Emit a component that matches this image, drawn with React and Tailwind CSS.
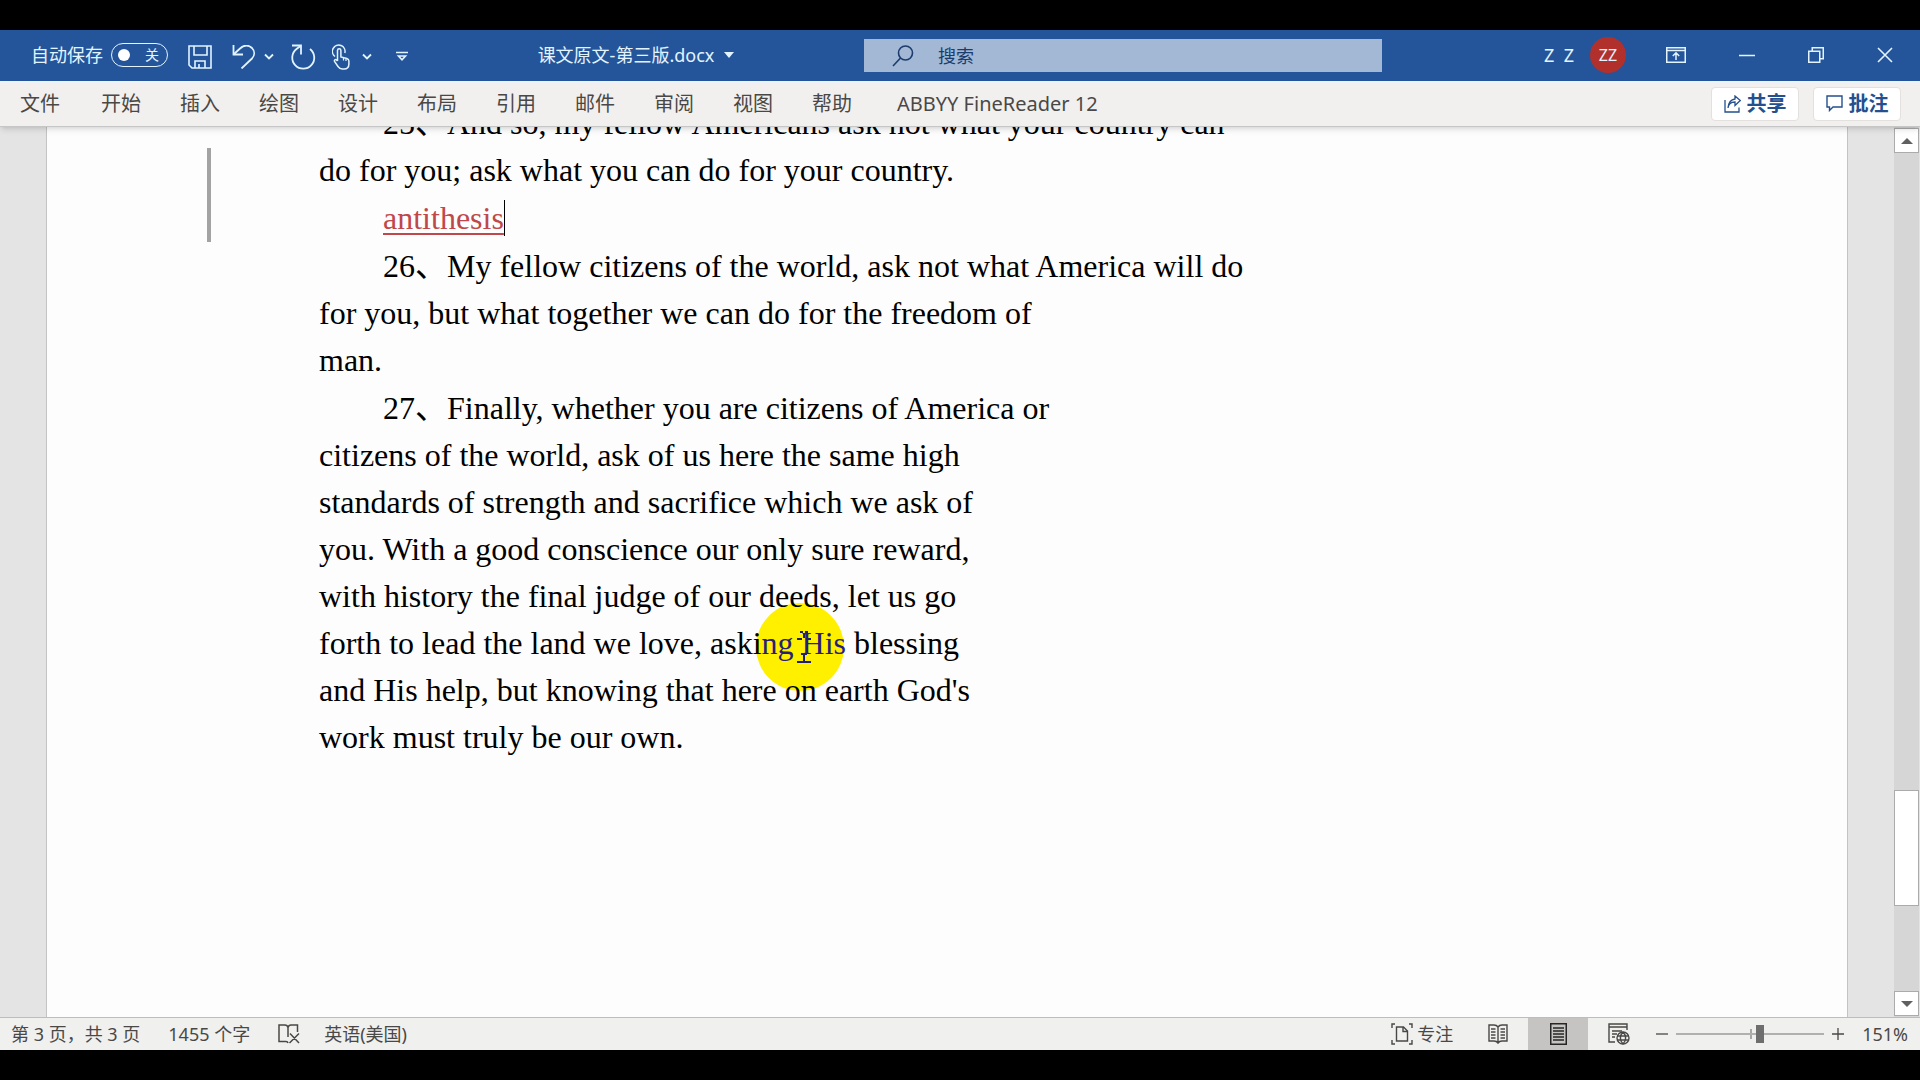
import React, { useState } from "react";

const tabs = ["开始", "插入", "绘图", "设计", "布局", "引用", "邮件", "审阅", "视图", "帮助"];

// Each paragraph keeps its own hard line breaks
const paragraph26 = [
  "for you, but what together we can do for the freedom of",
  "man.",
];

const paragraph27 = [
  "citizens of the world, ask of us here the same high",
  "standards of strength and sacrifice which we ask of",
  "you. With a good conscience our only sure reward,",
  "with history the final judge of our deeds, let us go",
];

function ChevronIcon() {
  return (
    <svg className="w-2.5 h-2" viewBox="0 0 10 8" fill="none" stroke="currentColor" strokeWidth="1.8">
      <path d="M1 1.5l4 4 4-4" />
    </svg>
  );
}

function SaveIcon() {
  return (
    <svg className="w-6 h-6" viewBox="0 0 24 24" fill="none" stroke="currentColor" strokeWidth="1.6">
      <path d="M1 1h22v22H4l-3-3z" />
      <path d="M6 1v9h13V1M7 23v-7h10v7M11 23v-4" />
    </svg>
  );
}

function UndoIcon() {
  return (
    <svg className="w-6 h-6" viewBox="0 0 24 24" fill="none" stroke="currentColor" strokeWidth="1.8">
      <path d="M1.5 0v9.5H11" />
      <path d="M1.5 9.5L8 3.5C12-.5 17 0 20 3c3 3.2 2.8 7.5 0 10.5L9.5 23.5" />
    </svg>
  );
}

function RedoIcon() {
  return (
    <svg className="w-[26px] h-[26px]" viewBox="0 0 26 26" fill="none" stroke="currentColor" strokeWidth="1.8">
      <path d="M2 1.5h9v9" />
      <path d="M10.5 2L6.500 5A11 11 0 1 0 20 5" />
    </svg>
  );
}

function TouchIcon() {
  return (
    <svg className="w-[18px] h-[26px]" viewBox="0 0 18 26" fill="none" stroke="currentColor" strokeWidth="1.5">
      <path d="M3 12.5A6.300 6.300 0 1 1 12.800 9" />
      <path d="M5.500 17V6.500a1.700 1.700 0 0 1 3.400 0V13l6 1.500c1.500.4 2 1.200 2 2.500v3c0 3-2 5-5 5h-1.500c-2 0-3.200-.8-4.400-2.500L2.500 17.500c-.6-1.500 1-2.500 2-1.500l1 1" />
      <path d="M11.500 14v2.500M14 14.500v2.500" strokeWidth="1.2" />
    </svg>
  );
}

function CustomizeIcon() {
  return (
    <svg className="w-3 h-3" viewBox="0 0 12 12" fill="none" stroke="currentColor" strokeWidth="1.6">
      <path d="M0 1.500h12M2.500 5h7L6 8.800z" />
    </svg>
  );
}

function SearchIcon() {
  return (
    <svg className="w-[22px] h-[22px]" viewBox="0 0 22 22" fill="none" stroke="currentColor" strokeWidth="1.6">
      <circle cx="13.5" cy="8" r="7" />
      <path d="M8.500 13L1 21" />
    </svg>
  );
}

function RibbonIcon() {
  return (
    <svg className="w-5 h-4" viewBox="0 0 20 16" fill="none" stroke="currentColor" strokeWidth="1.5">
      <path d="M.75.75h18.500v14.500H.75zM.75 3.500h18.500M10 13V6M6.800 9L10 5.800 13.200 9" />
    </svg>
  );
}

function RestoreIcon() {
  return (
    <svg className="w-4 h-4" viewBox="0 0 16 16" fill="none" stroke="currentColor" strokeWidth="1.5">
      <path d="M.75 4.250h11v11h-11zM4.250 4V.75h11v11H12" />
    </svg>
  );
}

function ShareIcon() {
  return (
    <svg className="w-[17px] h-[18px]" viewBox="0 0 17 18" fill="none" stroke="currentColor" strokeWidth="1.3">
      <path d="M1 5v12h14v-4.500" />
      <path d="M4 13c.5-4 3-6 7-6v3.500l5.300-5L11 1v3C7 4.500 4.500 7.500 4 13z" />
    </svg>
  );
}

function CommentIcon() {
  return (
    <svg className="w-[17px] h-[17px]" viewBox="0 0 17 17" fill="none" stroke="currentColor" strokeWidth="1.4">
      <path d="M1 1h15v11H7l-3.500 3.500V12H1z" />
    </svg>
  );
}

function ProofIcon() {
  return (
    <svg className="w-[22px] h-5" viewBox="0 0 22 20" fill="none" stroke="currentColor" strokeWidth="1.5">
      <path d="M10 3.500C9.500 1.500 8.500 1 7 1H1v16.500h7c1 0 1.800.5 2 1.500M10 3.500V13M10 3.500C10.500 1.500 11.500 1 13 1h6.500v7M12 9.500l9 9.500M21 9.500L11.500 19" />
    </svg>
  );
}

function FocusIcon() {
  return (
    <svg className="w-[22px] h-[22px]" viewBox="0 0 22 22" fill="none" stroke="currentColor" strokeWidth="1.4">
      <path d="M4 1H1v4M18 1h3v4M4 21H1v-4M18 21h3v-4" />
      <path d="M5.500 4h7l4 4v10h-11zM12 4v4.500h4.500" />
    </svg>
  );
}

function ReadIcon() {
  return (
    <svg className="w-5 h-5" viewBox="0 0 20 20" fill="none" stroke="currentColor" strokeWidth="1.4">
      <path d="M10 3C9 1.500 7.500 1 6 1H1v16h5c2 0 3 .5 4 2 1-1.500 2-2 4-2h5V1h-5c-1.500 0-3 .5-4 2zM10 3v16" />
      <path d="M3 5h4.500M3 8h4.500M3 11h4.500M3 14h4.500M12.500 5H17M12.500 8H17M12.500 11H17M12.500 14H17" />
    </svg>
  );
}

function PrintIcon() {
  return (
    <svg className="w-[17px] h-[22px]" viewBox="0 0 17 22" fill="none" stroke="currentColor" strokeWidth="1.5">
      <path d="M.75.75h15.500v20.500H.75z" />
      <path d="M3 5h11M3 8h11M3 11h11M3 14h11M3 17h11" />
    </svg>
  );
}

function WebIcon() {
  return (
    <svg className="w-[22px] h-[22px]" viewBox="0 0 22 22" fill="none" stroke="currentColor" strokeWidth="1.4">
      <path d="M7 19H1V1h18v6M1 4h18M4 8h10M4 11h5M4 14h3" />
      <circle cx="15" cy="15" r="6" />
      <path d="M15 9c-3.500 3.500-3.500 8.500 0 12M15 9c3.500 3.500 3.500 8.500 0 12M9 13h12M9 17h12" />
    </svg>
  );
}

function TitleBar() {
  const [autoSave, setAutoSave] = useState(false);

  return (
    <header className="flex items-center h-[51px] shrink-0 pb-0.5 bg-[#24559b] text-[#e2f4ff] text-lg">
      <div className="flex items-center w-[45%] pl-[31px]">
        <label className="flex items-center gap-2 cursor-pointer">
          自动保存
          <input
            type="checkbox"
            className="sr-only"
            checked={autoSave}
            onChange={(e) => setAutoSave(e.target.checked)}
          />
          <span className="flex items-center justify-between w-[57px] h-6 pl-1.5 pr-2 rounded-full border border-current text-sm">
            <span className="w-3 h-3 rounded-full bg-white" />
            {autoSave ? "开" : "关"}
          </span>
        </label>
        <div className="flex items-center pt-1">
          <button className="ml-5" aria-label="保存"><SaveIcon /></button>
          <button className="ml-5" aria-label="撤消"><UndoIcon /></button>
          <button className="ml-2" aria-label="撤消选项"><ChevronIcon /></button>
          <button className="ml-4" aria-label="重复"><RedoIcon /></button>
          <button className="ml-4" aria-label="触摸模式"><TouchIcon /></button>
          <button className="ml-3" aria-label="触摸选项"><ChevronIcon /></button>
          <button className="ml-6" aria-label="自定义"><CustomizeIcon /></button>
        </div>
        <button className="flex items-center gap-2.5 mx-auto">
          课文原文-第三版.docx
          <svg className="w-2.5 h-1.5" viewBox="0 0 10 6" fill="currentColor">
            <path d="M0 0h10L5 6z" />
          </svg>
        </button>
      </div>

      <div className="flex items-center gap-6 w-[27%] h-[33px] mt-0.5 pl-7 bg-[#a2b8d5] text-[#1c3c6e]">
        <SearchIcon />
        <input
          type="text"
          aria-label="搜索"
          placeholder="搜索"
          className="flex-1 min-w-0 bg-transparent outline-none placeholder:text-[#1c3c6e]"
        />
      </div>

      <div className="flex items-center justify-end flex-1 pr-[27px]">
        <span>Z&nbsp; Z</span>
        <span className="flex items-center justify-center w-9 h-9 ml-4 rounded-full bg-[#b2302c] text-base">
          ZZ
        </span>
        <button className="ml-10" aria-label="功能区显示选项"><RibbonIcon /></button>
        <button className="ml-[53px]" aria-label="最小化">
          <svg className="w-4 h-4" viewBox="0 0 16 16" stroke="currentColor" strokeWidth="1.5">
            <path d="M0 8.500h16" />
          </svg>
        </button>
        <button className="ml-[53px]" aria-label="还原"><RestoreIcon /></button>
        <button className="ml-[53px]" aria-label="关闭">
          <svg className="w-4 h-4" viewBox="0 0 16 16" stroke="currentColor" strokeWidth="1.6">
            <path d="M1 1l14 14M15 1L1 15" />
          </svg>
        </button>
      </div>
    </header>
  );
}

function Ribbon() {
  return (
    <nav className="relative z-10 flex items-center h-[46px] shrink-0 pb-0.5 pl-5 pr-[19px] bg-[#f1f0ef] border-t-2 border-t-[#eef2fb] border-b border-b-[#c6c6c6] text-xl text-[#4a4846] shadow-md">
      <button className="mr-[41px]">文件</button>
      <div className="flex gap-[39px]">
        {tabs.map((tab) => (
          <button key={tab}>{tab}</button>
        ))}
      </div>
      <button className="ml-[45px]">ABBYY FineReader 12</button>
      <div className="flex gap-3.5 ml-auto font-bold text-[#24508f]">
        <button className="flex items-center justify-center gap-1.5 w-[88px] h-[34px] rounded-sm border border-[#e3e0de] bg-white">
          <ShareIcon />
          共享
        </button>
        <button className="flex items-center justify-center gap-1.5 w-[88px] h-[34px] rounded-sm border border-[#e3e0de] bg-white">
          <CommentIcon />
          批注
        </button>
      </div>
    </nav>
  );
}

function Pointer() {
  return (
    <>
      <span className="absolute -z-10 top-1/2 left-1/2 w-[88px] h-[88px] mt-1 -ml-1 -translate-x-1/2 -translate-y-1/2 rounded-full bg-[#fff000]" />
      <svg
        className="absolute top-1/2 left-1/2 w-3.5 h-8 mt-1 -translate-x-1/2 -translate-y-1/2"
        viewBox="0 0 14 32"
        fill="none"
        stroke="#1f1f70"
        strokeWidth="2"
      >
        <path d="M3 1h3M8 1h3M7 2v5M0 8h5M9 8h5M7 22v8M4 23h6M0 31h14" />
      </svg>
    </>
  );
}

function Scrollbar() {
  return (
    <div className="flex flex-col w-[25px] mr-px py-px bg-[#d6d6d6]">
      <button aria-label="向上滚动" className="flex items-center justify-center h-[25px] shrink-0 border border-[#ababab] bg-white">
        <svg className="w-3 h-1.5" viewBox="0 0 12 6" fill="#606060"><path d="M0 6h12L6 0z" /></svg>
      </button>
      <div className="flex-1">
        <div className="h-[76%]" />
        <div className="h-[116px] border border-[#ababab] bg-white" />
      </div>
      <button aria-label="向下滚动" className="flex items-center justify-center h-[25px] shrink-0 border border-[#ababab] bg-white">
        <svg className="w-3 h-1.5" viewBox="0 0 12 6" fill="#606060"><path d="M0 0h12L6 6z" /></svg>
      </button>
    </div>
  );
}

function Document() {
  return (
    <main className="flex flex-1 min-h-0 overflow-hidden bg-[#e4e4e4]">
      <article className="flex-1 isolate ml-[46px] mr-[46px] pl-[272px] overflow-hidden whitespace-nowrap border-x border-[#c3c3c3] bg-[#fdfdfd] text-black text-[32px] leading-[47px] font-['Liberation_Serif','Noto_Sans_CJK_SC',serif]">
        <div className="flex flex-col gap-px -mt-[27px]">
          <p className="indent-16">
            25、And so, my fellow Americans ask not what your country can
            <br />
            do for you; ask what you can do for your country.
          </p>
          <p className="relative pl-16 text-[#c0474a]">
            {/* revision mark in the margin */}
            <span className="absolute bottom-0 -left-28 w-1 h-[94px] bg-[#a3a3a3]" />
            <span className="inline-block leading-9 border-r border-black">
              <u className="decoration-2 underline-offset-4">antithesis</u>
            </span>
          </p>
          <p className="indent-16">
            26、My fellow citizens of the world, ask not what America will do
            {paragraph26.map((line) => (
              <React.Fragment key={line}>
                <br />
                {line}
              </React.Fragment>
            ))}
          </p>
          <p className="indent-16">
            27、Finally, whether you are citizens of America or
            {paragraph27.map((line) => (
              <React.Fragment key={line}>
                <br />
                {line}
              </React.Fragment>
            ))}
            <br />
            forth to lead the land we love, aski
            <span className="relative text-[#26207a] indent-0">
              ng His
              <Pointer />
            </span>{" "}
            blessing
            <br />
            and His help, but knowing that here on earth God's
            <br />
            work must truly be our own.
          </p>
        </div>
      </article>
      <Scrollbar />
    </main>
  );
}

function StatusBar() {
  const [zoom, setZoom] = useState(57);

  return (
    <footer className="flex items-center h-[33px] shrink-0 pl-[11px] pr-3 border-t border-[#bdbdbd] bg-[#f0f0ef] text-lg text-[#4a4846]">
      <span>第 3 页，共 3 页</span>
      <span className="ml-7">1455 个字</span>
      <button className="ml-7" aria-label="校对"><ProofIcon /></button>
      <span className="ml-6">英语(美国)</span>

      <div className="flex items-center h-full ml-auto">
        <button className="flex items-center gap-1"><FocusIcon />专注</button>
        <button className="ml-[35px]" aria-label="阅读视图"><ReadIcon /></button>
        <button className="flex items-center justify-center w-[60px] h-full ml-5 bg-[#c5c4c3] text-[#262626]" aria-label="页面视图">
          <PrintIcon />
        </button>
        <button className="ml-5" aria-label="Web 版式视图"><WebIcon /></button>
        <button className="ml-[26px]" aria-label="缩小">
          <svg className="w-3 h-3" viewBox="0 0 12 12" stroke="currentColor" strokeWidth="1.3"><path d="M0 6h12" /></svg>
        </button>
        <div className="relative flex items-center ml-2">
          <span className="absolute left-1/2 w-0.5 h-2.5 bg-[#a8a8a8]" />
          <input
            type="range"
            aria-label="缩放"
            min="0"
            max="100"
            value={zoom}
            onChange={(e) => setZoom(Number(e.target.value))}
            className="relative w-[148px] h-[18px] appearance-none bg-transparent [&::-webkit-slider-runnable-track]:h-0.5 [&::-webkit-slider-runnable-track]:bg-[#b0b0b0] [&::-webkit-slider-thumb]:appearance-none [&::-webkit-slider-thumb]:w-2 [&::-webkit-slider-thumb]:h-[18px] [&::-webkit-slider-thumb]:-mt-2 [&::-webkit-slider-thumb]:bg-[#6e6e6e]"
          />
        </div>
        <button className="ml-2" aria-label="放大">
          <svg className="w-3 h-3" viewBox="0 0 12 12" stroke="currentColor" strokeWidth="1.3"><path d="M0 6h12M6 0v12" /></svg>
        </button>
        <span className="ml-[18px]">151%</span>
      </div>
    </footer>
  );
}

export default function App() {
  return (
    <div lang="zh-CN" className="flex flex-col h-screen py-[30px] bg-black whitespace-nowrap font-['Noto_Sans','Noto_Sans_CJK_SC',sans-serif]">
      <TitleBar />
      <Ribbon />
      <Document />
      <StatusBar />
    </div>
  );
}
